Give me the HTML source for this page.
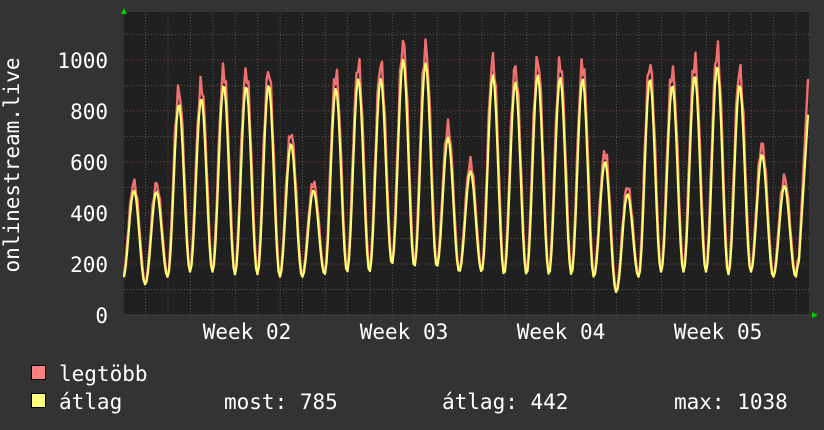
<!DOCTYPE html>
<html><head><meta charset="utf-8"><style>
html,body{margin:0;padding:0;background:#333;}
body{width:824px;height:430px;overflow:hidden;position:relative;}
svg{position:absolute;left:0;top:0}
</style></head><body>
<svg id="g" width="824" height="430" xmlns="http://www.w3.org/2000/svg" font-family="DejaVu Sans Mono, Liberation Mono, monospace" fill="#fff">
<rect x="124" y="12" width="685" height="303" fill="#202020"/>
<g id="grid"></g>
<path id="mx" fill="none" stroke="#f07070" stroke-width="2.4" stroke-linejoin="round"/>
<path id="av" fill="none" stroke="#ffff70" stroke-width="2.2" stroke-linejoin="round"/>
<line x1="124" y1="315" x2="812" y2="315" stroke="#444" stroke-width="1"/>
<polygon points="121,14 127,14 124,8" fill="#00cc00"/>
<polygon points="812,312 812,318 818,315" fill="#00cc00"/>
<g font-size="21" text-anchor="end">
<text x="108" y="323">0</text><text x="108" y="272">200</text><text x="108" y="221">400</text><text x="108" y="170">600</text><text x="108" y="119">800</text><text x="108" y="68">1000</text>
</g>
<g font-size="21" text-anchor="middle">
<text x="247" y="339">Week 02</text><text x="404" y="339">Week 03</text><text x="561" y="339">Week 04</text><text x="718" y="339">Week 05</text>
</g>
<text transform="translate(19,165) rotate(-90)" font-size="21" text-anchor="middle">onlinestream.live</text>
<rect x="31.5" y="365.5" width="14" height="14" fill="#ff8080" stroke="#000"/>
<rect x="31.5" y="393.5" width="14" height="14" fill="#ffff80" stroke="#000"/>
<g font-size="21">
<text x="59" y="381">legtöbb</text>
<text x="59" y="409">átlag</text>
<text x="224" y="409">most: 785</text>
<text x="442" y="409">átlag: 442</text>
<text x="674" y="409">max: 1038</text>
</g>
</svg>
<script>
var ns="http://www.w3.org/2000/svg",g=document.getElementById('grid');
function ln(x1,y1,x2,y2,c){var l=document.createElementNS(ns,'line');l.setAttribute('x1',x1);l.setAttribute('y1',y1);l.setAttribute('x2',x2);l.setAttribute('y2',y2);l.setAttribute('stroke',c);l.setAttribute('stroke-dasharray','1,2');g.appendChild(l);}
for(var i=1;i<=11;i++){var y=315-i*25.5;ln(124,y,809,y,i%2==0?'#7a3b3b':'#555');}
for(var k=-1;k<32;k++){var x=168+k*22.43;if(x<=124||x>=809)continue;ln(x,14,x,318,(k%7==0)?'#7a3b3b':'#555');}
var pk=[520,515,880,905,960,955,960,715,520,945,985,985,1065,1050,740,600,1000,970,1000,990,985,640,505,985,960,1000,1040,960,670,540,925];
var tr=[140,120,150,170,170,160,160,150,150,160,170,170,200,190,190,170,170,160,160,160,160,150,90,150,170,170,170,160,170,150,150,150];
var y0=315,s=0.255,m='',a='';
for(var x=124;x<=808;x+=1.5){
 var p=(x-134)/22.43,k=Math.round(p),t=p-k;
 var kk=Math.max(0,Math.min(pk.length-1,k));
 var P=pk[kk],T=tr[Math.max(0,Math.min(tr.length-1,t<0?k:k+1))];
 var c=Math.max(0,Math.cos(Math.PI*t));
 var f=Math.pow(c,1.8)*(1+0.05*Math.sin(x*1.7));
 var v=T+(P-T)*f;
 var w=T+(P*0.94-T)*Math.pow(c,2.1);
 if(x>798){var q=(x-798)/10;v=150+q*(925-150);w=150+q*(785-150);}
 m+=(m?'L':'M')+x.toFixed(1)+','+(y0-v*s).toFixed(1);
 a+=(a?'L':'M')+x.toFixed(1)+','+(y0-w*s).toFixed(1);
}
document.getElementById('mx').setAttribute('d',m);
document.getElementById('av').setAttribute('d',a);
</script>
</body></html>
